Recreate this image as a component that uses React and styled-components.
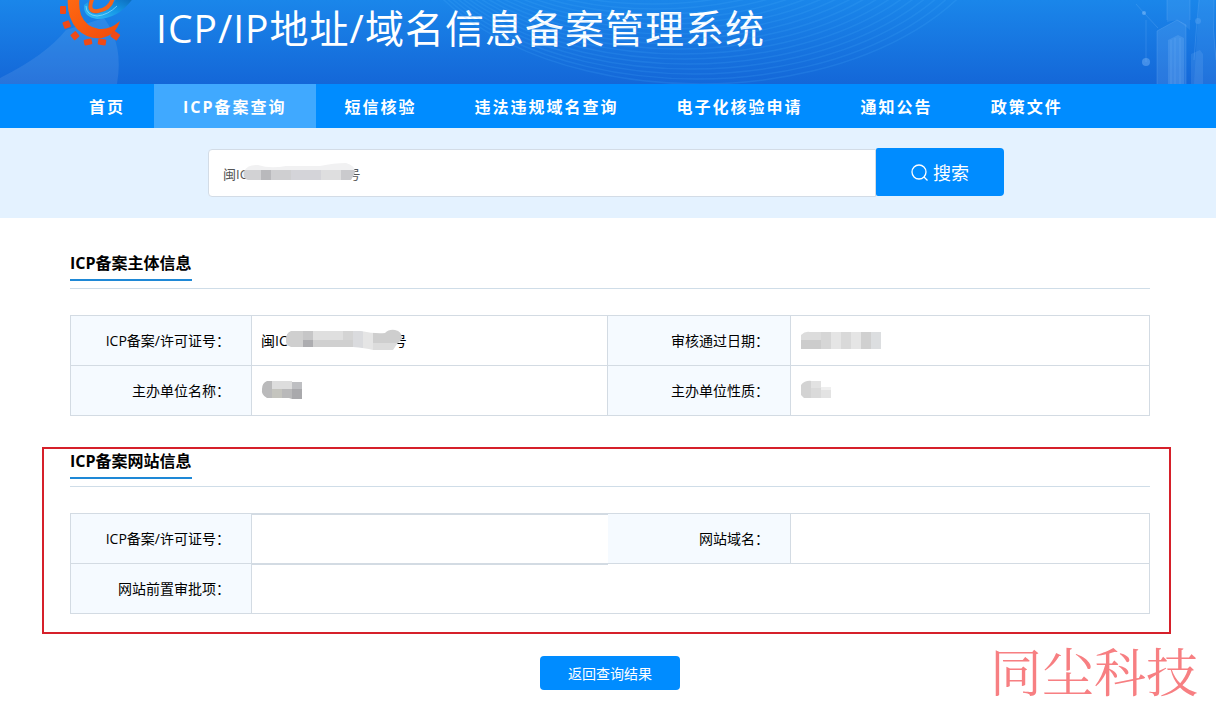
import React from "react";
import styled, { createGlobalStyle } from "styled-components";

const navItems = [
    "首页",
    "ICP备案查询",
    "短信核验",
    "违法违规域名查询",
    "电子化核验申请",
    "通知公告",
    "政策文件",
];

const rings = Array.from({ length: 24 }, (_, i) => i);

// each block: [x, y, width, height, colour]
const searchMask = {
    width: 118,
    height: 24,
    outline: "M2 8 Q6 1 16 2 Q28 6 44 3 H78 Q92 0 104 0 Q113 2 113 10 L109 17 H6 Q0 15 2 8Z",
    blocks: [
        [0, 0, 118, 7, "#f1f1f2"],
        [0, 7, 19, 10, "#d2d2d4"],
        [19, 7, 10, 10, "#b9b9bc"],
        [29, 7, 20, 10, "#cfcfd1"],
        [49, 7, 30, 10, "#d4d4d9"],
        [79, 7, 20, 10, "#dededf"],
        [99, 7, 19, 10, "#cacacd"],
    ],
};

const licenceMask = {
    width: 122,
    height: 24,
    outline: "M6 2 H76 Q90 5 100 4 Q104 0 110 1 Q117 2 117 10 Q112 14 108 21 H88 Q80 19 68 18 H6 Q0 16 1 10 Q1 4 6 2Z",
    blocks: [
        [0, 0, 18, 24, "#cfcfcf"],
        [18, 0, 10, 11, "#c6c6c7"],
        [18, 11, 10, 13, "#adadb0"],
        [28, 0, 30, 11, "#dfdfdf"],
        [28, 11, 40, 13, "#d0d0d0"],
        [58, 0, 10, 11, "#d4d4d4"],
        [68, 0, 10, 24, "#dadbde"],
        [78, 0, 10, 24, "#e5e5e5"],
        [88, 0, 34, 14, "#cecece"],
        [88, 14, 34, 10, "#dcdcdc"],
    ],
};

const dateMask = {
    width: 82,
    height: 18,
    outline: "M1 4 Q5 0 10 1 H81 V18 H1Z",
    blocks: [
        [0, 0, 21, 9, "#dcdcdc"],
        [0, 9, 21, 9, "#cccccc"],
        [21, 0, 10, 18, "#d6d6d6"],
        [31, 0, 10, 18, "#e5e5e5"],
        [41, 0, 10, 18, "#d9d9d9"],
        [51, 0, 10, 18, "#e5e5e5"],
        [61, 0, 10, 18, "#d0d0d0"],
        [71, 0, 11, 18, "#dcdee0"],
    ],
};

const nameMask = {
    width: 42,
    height: 18,
    outline: "M6 0 H31 V1 H41 V18 H31 L28 17 H6 Q0 14 1 8 Q1 2 6 0Z",
    blocks: [
        [0, 0, 11, 18, "#bababb"],
        [11, 0, 20, 8, "#dddddd"],
        [11, 8, 10, 10, "#c4c4be"],
        [21, 8, 10, 10, "#b9b9ba"],
        [31, 0, 11, 8, "#bebfc2"],
        [31, 8, 11, 10, "#a9a9ac"],
    ],
};

const kindMask = {
    width: 32,
    height: 20,
    outline: "M1 5 Q5 0 12 1 H21 V7 H31 V18 H4 L1 15Z",
    blocks: [
        [0, 0, 11, 20, "#d3d3d3"],
        [11, 0, 10, 8, "#e2e2e2"],
        [11, 8, 10, 12, "#dadada"],
        [21, 0, 11, 10, "#efefef"],
        [21, 10, 11, 10, "#e3e3e3"],
    ],
};

const Mosaic = ({ id, mask }) => (
    <svg width={mask.width} height={mask.height} aria-hidden="true">
        <clipPath id={id}>
            <path d={mask.outline} />
        </clipPath>
        <g clipPath={`url(#${id})`}>
            {mask.blocks.map(([x, y, w, h, fill]) => (
                <rect key={`${x}-${y}`} x={x} y={y} width={w} height={h} fill={fill} />
            ))}
        </g>
    </svg>
);

const Logo = () => (
    <svg width="152" height="84" viewBox="0 0 152 84" aria-hidden="true">
        <defs>
            <linearGradient id="swirl" x1="0" y1="1" x2="1" y2="0">
                <stop offset="0" stopColor="#35c0f8" />
                <stop offset="0.5" stopColor="#1597e6" />
                <stop offset="1" stopColor="#0b62b4" />
            </linearGradient>
            <linearGradient id="gear" x1="0" y1="0" x2="1" y2="1">
                <stop offset="0" stopColor="#ff6a12" />
                <stop offset="1" stopColor="#f04a0c" />
            </linearGradient>
        </defs>
        <path d="M0 78 Q46 55 66 30 L104 18 Q124 45 117 84 H0Z" fill="#fff" opacity="0.09" />
        <path
            d="M68 -4 Q66 17 77 29 Q88 40 102 38 Q116 35 120 21 Q110 30 99 29 Q86 27 81 15 Q78 6 80 -4Z"
            fill="url(#gear)"
        />
        <g fill="#ee4a18">
            <rect x="60" y="6" width="6" height="8" rx="1" />
            <rect x="63" y="21" width="7" height="7" rx="1" transform="rotate(-22 67 24)" />
            <rect x="71" y="32" width="7" height="7" rx="1" transform="rotate(-40 75 35)" />
            <rect x="84" y="39" width="8" height="6" rx="1" transform="rotate(-12 88 42)" />
            <rect x="98" y="39" width="8" height="6" rx="1" transform="rotate(10 102 42)" />
            <rect x="111" y="32" width="8" height="7" rx="1" transform="rotate(35 115 36)" />
        </g>
        <path
            d="M84 5 Q83 17 97 19 Q119 19 134 -3 L118 -4 Q110 12 96 14 Q87 14 88 2Z"
            fill="url(#swirl)"
        />
        <path d="M86 6 Q86 15 97 16 Q108 15 117 6" fill="none" stroke="#8fe2ff" strokeWidth="1" opacity="0.7" />
        <path d="M93 -3 Q86 13 98 11 Q111 9 113 -3" fill="none" stroke="#f4641a" strokeWidth="4" />
    </svg>
);

const Skyline = () => (
    <svg width="80" height="84" viewBox="0 0 80 84" aria-hidden="true">
        <g stroke="#8cc4ff" strokeWidth="1" opacity="0.2" fill="none">
            <path d="M8 13 L22 28 M10 62 V20 M0 4 L8 13" />
            <path d="M21 84 V31 L41 20 L50 25 V84" />
            <path d="M31 20 V0 M54 20 V0 M63 0 Q60 30 58 60 M78 0 Q76 30 80 60" />
            <path d="M35 84 V40 M39 84 V38 M44 84 V38" />
        </g>
        <g fill="#9cccff">
            <circle cx="8" cy="13" r="2" opacity="0.45" />
            <circle cx="10" cy="62" r="4" opacity="0.35" />
            <circle cx="62" cy="21" r="3" opacity="0.2" />
            <path d="M21 84 V31 L41 20 L50 25 V84Z" opacity="0.16" />
            <path d="M32 84 V40 L42 35 L48 38 V84Z" opacity="0.18" />
            <path d="M31 22 V0 H54 V30 L41 20Z" opacity="0.12" />
            <path d="M63 0 H78 Q76 30 80 54 V84 H58Z" opacity="0.1" />
            <path d="M55 84 V54 L64 50 L67 54 V84Z" opacity="0.14" />
        </g>
    </svg>
);

const RecordTitle = ({ children }) => (
    <TitleRow>
        <h2>{children}</h2>
    </TitleRow>
);

const App = () => {
    return (
        <React.Fragment>
            <GlobalStyle />
            <Header>
                <Waves viewBox="0 0 1216 84" preserveAspectRatio="xMidYMin slice" aria-hidden="true">
                    {rings.map((i) => (
                        <ellipse key={i} cx={700 - i * 3} cy={-100 - i} rx={305 - i * 5} ry={184 - i * 4} />
                    ))}
                </Waves>
                <Logo />
                <h1>ICP/IP地址/域名信息备案管理系统</h1>
                <Skyline />
            </Header>
            <Nav>
                {navItems.map((item) => (
                    <NavLink href="#" key={item} $active={item === "ICP备案查询"}>
                        {item}
                    </NavLink>
                ))}
            </Nav>
            <SearchBand>
                <SearchForm onSubmit={(e) => e.preventDefault()}>
                    <SearchField>
                        <input
                            type="text"
                            aria-label="搜索"
                            defaultValue={"闽IC\u3000\u3000\u3000\u3000\u3000\u3000\u3000\u2002\u2009号"}
                        />
                        <Cover $left={34} $top={15}>
                            <Mosaic id="search-mask" mask={searchMask} />
                        </Cover>
                    </SearchField>
                    <SearchButton type="submit">
                        <svg width="17" height="17" viewBox="0 0 17 17" fill="none" stroke="currentColor" strokeWidth="1.3">
                            <circle cx="8" cy="8" r="7" />
                            <path d="M13 13 L16.5 16.5" />
                        </svg>
                        搜索
                    </SearchButton>
                </SearchForm>
            </SearchBand>
            <Main>
                <Record>
                    <RecordTitle>ICP备案主体信息</RecordTitle>
                    <InfoTable>
                        <tbody>
                            <tr>
                                <Label scope="row">ICP备案/许可证号：</Label>
                                <Value>
                                    <Masked>
                                        {"闽IC\u3000\u3000\u3000\u3000\u3000\u3000\u3000\u2002号"}
                                        <Cover $left={24} $top={-1}>
                                            <Mosaic id="licence-mask" mask={licenceMask} />
                                        </Cover>
                                    </Masked>
                                </Value>
                                <Label scope="row">审核通过日期：</Label>
                                <Value><Mosaic id="date-mask" mask={dateMask} /></Value>
                            </tr>
                            <tr>
                                <Label scope="row">主办单位名称：</Label>
                                <Value><Mosaic id="name-mask" mask={nameMask} /></Value>
                                <Label scope="row">主办单位性质：</Label>
                                <Value><Mosaic id="kind-mask" mask={kindMask} /></Value>
                            </tr>
                        </tbody>
                    </InfoTable>
                </Record>
                <Record $marked>
                    <RecordTitle>ICP备案网站信息</RecordTitle>
                    <InfoTable>
                        <tbody>
                            <tr>
                                <Label scope="row">ICP备案/许可证号：</Label>
                                <Value $blank />
                                <Label scope="row">网站域名：</Label>
                                <Value />
                            </tr>
                            <tr>
                                <Label scope="row">网站前置审批项：</Label>
                                <Value colSpan={3} />
                            </tr>
                        </tbody>
                    </InfoTable>
                </Record>
                <BackButton type="button">返回查询结果</BackButton>
            </Main>
            <Watermark>同尘科技</Watermark>
        </React.Fragment>
    );
};

export default App;

const GlobalStyle = createGlobalStyle`
    * {
        box-sizing: border-box;
    }

    body {
        margin: 0;
        background: #fff;
        color: #000;
        font-family: 'Open Sans', 'Noto Sans CJK SC', sans-serif;
        font-size: 14px;
    }

    button, input {
        font-family: inherit;
    }
`;

const Header = styled.header`
    position: relative;
    display: flex;
    height: 84px;
    overflow: hidden;
    background: linear-gradient(#1a86ea, #1467d8);

    svg {
        flex: none;
    }

    h1 {
        flex: 1;
        margin: 0;
        padding-left: 4px;
        color: #fff;
        font-size: 39px;
        font-weight: 400;
        letter-spacing: 1px;
        line-height: 56px;
        white-space: nowrap;
    }
`;

const Waves = styled.svg`
    position: absolute;
    inset: 0;
    width: 100%;
    height: 100%;
    fill: none;
    stroke: #4db4ff;
    stroke-width: 1.5;
    opacity: 0.16;
`;

const Nav = styled.nav`
    display: flex;
    height: 44px;
    padding-left: 60px;
    background: #008cff;
`;

const NavLink = styled.a`
    padding: 0 29px;
    background: ${(props) => (props.$active ? "#40a9ff" : "transparent")};
    color: #fff;
    font-size: 16px;
    font-weight: 700;
    letter-spacing: 2px;
    line-height: 46px;
    text-decoration: none;
    white-space: nowrap;
`;

const SearchBand = styled.div`
    padding: 20px 4px 21px 0;
    background: #e4f2ff;
`;

const SearchForm = styled.form`
    display: flex;
    max-width: 796px;
    margin: 0 auto;
`;

const SearchField = styled.div`
    position: relative;
    flex: 1;
    padding-top: 1px;

    input {
        display: block;
        width: 100%;
        height: 48px;
        padding: 0 14px;
        border: 1px solid #d3dce6;
        border-radius: 4px 0 0 4px;
        background: #fff;
        color: #555;
        font-size: 13px;
    }
`;

const Cover = styled.span`
    position: absolute;
    left: ${(props) => props.$left}px;
    top: ${(props) => props.$top}px;
    line-height: 0;
`;

const SearchButton = styled.button`
    display: flex;
    align-items: center;
    justify-content: center;
    gap: 5px;
    width: 128px;
    height: 48px;
    border: 0;
    border-radius: 2px 4px 4px 2px;
    background: #008cff;
    color: #fff;
    font-size: 18px;
    cursor: pointer;
`;

const Main = styled.main`
    display: flex;
    flex-direction: column;
    padding: 30px 66px 20px 70px;
`;

const Record = styled.section`
    position: relative;
    margin-bottom: 30px;

    ${(props) => props.$marked && `
        margin-bottom: 42px;

        &::after {
            content: '';
            position: absolute;
            inset: 1px -21px -20px -28px;
            border: 2px solid #d6202a;
            pointer-events: none;
        }
    `}
`;

const TitleRow = styled.div`
    display: flex;
    height: 41px;
    margin-bottom: 26px;
    border-bottom: 1px solid #cfdde8;

    h2 {
        height: 33px;
        margin: 0;
        border-bottom: 2px solid #1e88d6;
        font-size: 16px;
        font-weight: 700;
        line-height: 30px;
    }
`;

const InfoTable = styled.table`
    width: 100%;
    border-collapse: collapse;
    table-layout: fixed;

    td:nth-child(2) {
        width: 33%;
    }

    th:nth-child(3) {
        width: 183px;
    }
`;

const Label = styled.th`
    width: 181px;
    height: 50px;
    padding: 0 21px 2px 0;
    border: 1px solid #d3dbe3;
    background: #f5faff;
    font-weight: 400;
    text-align: right;
`;

const Value = styled.td`
    position: relative;
    height: 50px;
    padding: 0 9px 2px;
    border: 1px solid #d3dbe3;

    > svg {
        display: block;
    }

    ${(props) => props.$blank && `
        &::before {
            content: '';
            position: absolute;
            inset: 0 -1px -2px 0;
            border: solid #d3dbe3;
            border-width: 1px 0 2px;
            background: #fff;
        }
    `}
`;

const Masked = styled.span`
    position: relative;
    display: inline-block;
`;

const BackButton = styled.button`
    align-self: center;
    width: 140px;
    height: 34px;
    border: 0;
    border-radius: 4px;
    background: #008cff;
    color: #fff;
    font-size: 14px;
    cursor: pointer;
`;

const Watermark = styled.div`
    position: fixed;
    right: 18px;
    bottom: 6px;
    color: #f77f82;
    font-family: 'Noto Serif CJK SC', 'Noto Sans CJK SC', serif;
    font-size: 52px;
    font-weight: 400;
    line-height: 70px;
    pointer-events: none;
`;
